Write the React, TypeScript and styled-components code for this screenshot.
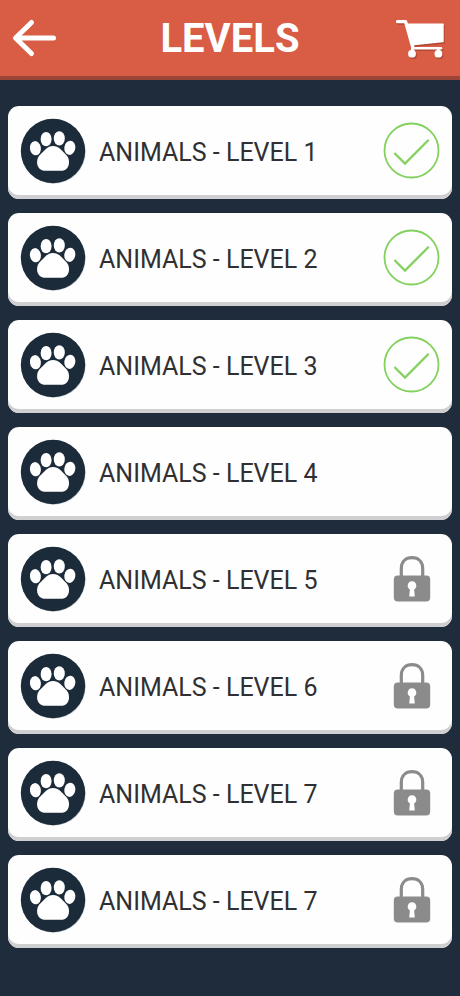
import React from "react";
import styled, { createGlobalStyle } from "styled-components";

const GlobalStyle = createGlobalStyle`
  *, *::before, *::after { box-sizing: border-box; }
  body {
    margin: 0;
    background: #1e2c3b;
    font-family: Roboto, "Liberation Sans", sans-serif;
  }
`;

const Page = styled.div`
  min-height: 100vh;
  background: #1e2c3b;
`;

const Header = styled.header`
  display: grid;
  grid-template-columns: 60px 1fr 60px;
  align-items: center;
  height: 80px;
  padding: 0 4px;
  background: #d95c44;
  border-bottom: 4px solid #9b4536;
`;

const IconButton = styled.button`
  display: flex;
  align-items: center;
  justify-content: center;
  width: 60px;
  height: 60px;
  padding: 0;
  border: 0;
  background: none;
  cursor: pointer;
`;

const Title = styled.h1`
  margin: 0;
  padding-top: 2px;
  color: #fff;
  font-size: 40px;
  font-weight: 700;
  line-height: 48px;
  text-align: center;
`;

const LevelList = styled.ul`
  display: flex;
  flex-direction: column;
  gap: 14px;
  margin: 0;
  padding: 26px 8px 40px;
  list-style: none;
`;

const LevelCard = styled.button`
  display: flex;
  align-items: center;
  gap: 13px;
  width: 100%;
  height: 93px;
  padding: 0 12px 4px;
  border: 0;
  border-radius: 11px;
  background: #fefefe;
  box-shadow: inset 0 -4px 0 #cfcfd1;
  color: #303032;
  font-family: inherit;
  text-align: left;
  cursor: pointer;

  &:disabled {
    cursor: default;
  }
`;

const LevelName = styled.span`
  flex: 1;
  padding-top: 4px;
  font-size: 25px;
  line-height: 30px;
  white-space: nowrap;
`;

const StatusSlot = styled.span`
  display: flex;
  align-items: center;
  justify-content: center;
  width: 57px;
  height: 57px;
`;

const BackIcon = () => (
  <svg width="60" height="60" viewBox="0 0 60 60" fill="none" stroke="#fff" strokeWidth="5" strokeLinecap="round" strokeLinejoin="round" aria-hidden="true">
    <path d="M27.5 14.5 11.5 30 27.5 45.5M12 30H49.5" />
  </svg>
);

const CartShape = () => (
  <>
    <path d="M6.5 13.6H14.6L22 40" fill="none" strokeWidth="3.4" strokeLinecap="round" strokeLinejoin="round" />
    <path d="M14.5 15.4H51.9Q52.7 15.4 52.7 16.2V33.4Q52.7 34.2 51.9 34.3L20.8 37.6Z" stroke="none" />
    <path d="M21.5 40.2H50" fill="none" strokeWidth="2.6" strokeLinecap="round" />
    <path d="M21.2 40V43M47.4 40V43" fill="none" strokeWidth="2.4" />
    <circle cx="21" cy="45.7" r="3.9" stroke="none" />
    <circle cx="47.4" cy="45.7" r="3.9" stroke="none" />
  </>
);

const CartIcon = () => (
  <svg width="60" height="60" viewBox="5 0 60 60" aria-hidden="true">
    <g transform="translate(1 1.5)" fill="#8e3a2b" stroke="#8e3a2b" opacity=".55">
      <CartShape />
    </g>
    <g fill="#fff" stroke="#fff">
      <CartShape />
    </g>
  </svg>
);

const PawIcon = () => (
  <svg width="66" height="66" viewBox="0 0 66 66" aria-hidden="true">
    <circle cx="33.6" cy="33.8" r="32" fill="#c9cdd1" />
    <circle cx="33" cy="33" r="32.2" fill="#1b2b3a" />
    <g fill="#fff">
      <ellipse cx="15.4" cy="30.2" rx="5.5" ry="7.1" transform="rotate(-8 15.4 30.2)" />
      <ellipse cx="26.1" cy="21.1" rx="5.5" ry="7.2" />
      <ellipse cx="39.3" cy="20.4" rx="5.5" ry="7.2" />
      <ellipse cx="49.8" cy="29.8" rx="5.5" ry="7.1" transform="rotate(8 49.8 29.8)" />
      <path d="M33 27.9C30.2 27.9 28 28.9 25.8 31L19.6 37.2C17.9 39 17.1 41.2 17.1 44.2C17.1 49.6 20.4 52.8 25.6 52.8H40.8C46 52.8 49 49.6 49 44.2C49 41.2 48.2 39 46.5 37.2L40.4 31C38.2 28.9 35.9 27.9 33 27.9Z" />
    </g>
  </svg>
);

const CheckIcon = () => (
  <svg width="57" height="57" viewBox="0 0 57 57" fill="none" stroke="#83d15e" role="img" aria-label="Completed">
    <circle cx="28.5" cy="28.5" r="27" strokeWidth="1.8" />
    <path d="M11.4 31 22 41.6 45.7 17.8" strokeWidth="2.3" />
  </svg>
);

const LockIcon = () => (
  <svg width="38" height="48" viewBox="0 0 38 48" role="img" aria-label="Locked">
    <path d="M8.3 23V13.7C8.3 6.6 12.8 2.7 19 2.7S29.7 6.6 29.7 13.7V23" fill="none" stroke="#8b8b8b" strokeWidth="3.2" />
    <rect x="0.8" y="20.6" width="36.4" height="26" rx="4" fill="#8b8b8b" />
    <path d="M19 26.2A4.4 4.4 0 0 0 16.9 34.4L16.2 41.6H21.8L21.1 34.4A4.4 4.4 0 0 0 19 26.2Z" fill="#fff" />
  </svg>
);

type Status = "done" | "open" | "locked";

const levels: { name: string; status: Status }[] = [
  { name: "ANIMALS - LEVEL 1", status: "done" },
  { name: "ANIMALS - LEVEL 2", status: "done" },
  { name: "ANIMALS - LEVEL 3", status: "done" },
  { name: "ANIMALS - LEVEL 4", status: "open" },
  { name: "ANIMALS - LEVEL 5", status: "locked" },
  { name: "ANIMALS - LEVEL 6", status: "locked" },
  { name: "ANIMALS - LEVEL 7", status: "locked" },
  { name: "ANIMALS - LEVEL 7", status: "locked" },
];

export default function App() {
  return (
    <Page>
      <GlobalStyle />
      <Header>
        <IconButton type="button" aria-label="Back">
          <BackIcon />
        </IconButton>
        <Title>LEVELS</Title>
        <IconButton type="button" aria-label="Shop">
          <CartIcon />
        </IconButton>
      </Header>
      <main>
        <LevelList>
          {levels.map((level, index) => (
            <li key={index}>
              <LevelCard type="button" disabled={level.status === "locked"}>
                <PawIcon />
                <LevelName>{level.name}</LevelName>
                <StatusSlot>
                  {level.status === "done" && <CheckIcon />}
                  {level.status === "locked" && <LockIcon />}
                </StatusSlot>
              </LevelCard>
            </li>
          ))}
        </LevelList>
      </main>
    </Page>
  );
}
